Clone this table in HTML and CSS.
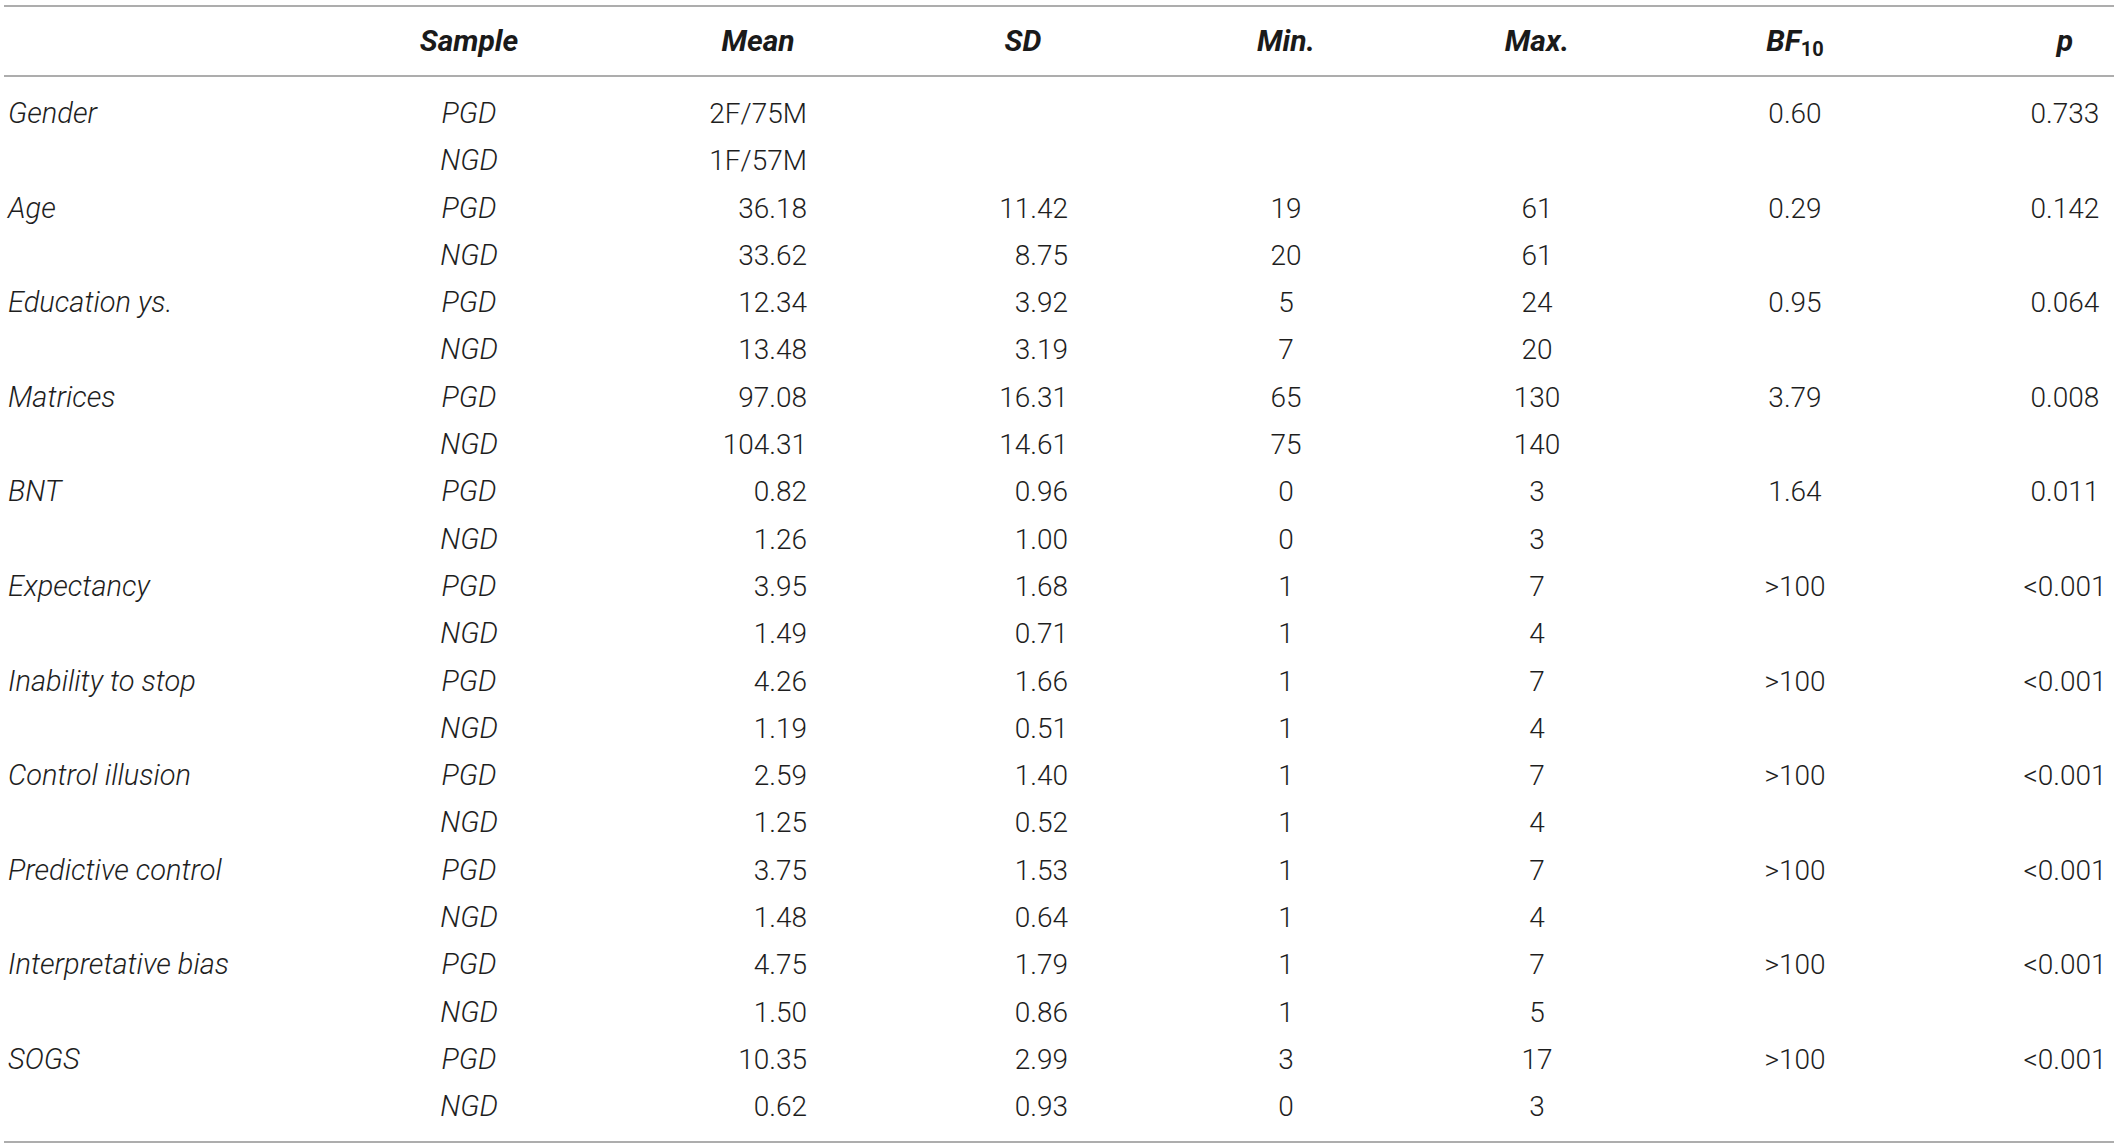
FILE: index.html
```html
<!DOCTYPE html>
<html lang="en">
<head>
<meta charset="utf-8">
<title>Descriptive statistics</title>
<link rel="stylesheet" href="styles.css">
</head>
<body>
<div class="page">
<table class="stats">
<colgroup>
<col class="c-label"><col class="c-sample"><col class="c-mean"><col class="c-sd"><col class="c-min"><col class="c-max"><col class="c-bf"><col class="c-p">
</colgroup>
<thead>
<tr>
<th class="label"></th>
<th>Sample</th>
<th>Mean</th>
<th>SD</th>
<th>Min.</th>
<th>Max.</th>
<th>BF<sub>10</sub></th>
<th class="pcol">p</th>
</tr>
</thead>
<tbody>
<tr class="first"><td class="label">Gender</td><td class="sample">PGD</td><td class="mean">2F/75M</td><td class="sd"></td><td class="mid"></td><td class="mid"></td><td class="mid">0.60</td><td class="pcol">0.733</td></tr>
<tr><td class="label"></td><td class="sample">NGD</td><td class="mean">1F/57M</td><td class="sd"></td><td class="mid"></td><td class="mid"></td><td class="mid"></td><td class="pcol"></td></tr>
<tr><td class="label">Age</td><td class="sample">PGD</td><td class="mean">36.18</td><td class="sd">11.42</td><td class="mid">19</td><td class="mid">61</td><td class="mid">0.29</td><td class="pcol">0.142</td></tr>
<tr><td class="label"></td><td class="sample">NGD</td><td class="mean">33.62</td><td class="sd">8.75</td><td class="mid">20</td><td class="mid">61</td><td class="mid"></td><td class="pcol"></td></tr>
<tr><td class="label">Education ys.</td><td class="sample">PGD</td><td class="mean">12.34</td><td class="sd">3.92</td><td class="mid">5</td><td class="mid">24</td><td class="mid">0.95</td><td class="pcol">0.064</td></tr>
<tr><td class="label"></td><td class="sample">NGD</td><td class="mean">13.48</td><td class="sd">3.19</td><td class="mid">7</td><td class="mid">20</td><td class="mid"></td><td class="pcol"></td></tr>
<tr><td class="label">Matrices</td><td class="sample">PGD</td><td class="mean">97.08</td><td class="sd">16.31</td><td class="mid">65</td><td class="mid">130</td><td class="mid">3.79</td><td class="pcol">0.008</td></tr>
<tr><td class="label"></td><td class="sample">NGD</td><td class="mean">104.31</td><td class="sd">14.61</td><td class="mid">75</td><td class="mid">140</td><td class="mid"></td><td class="pcol"></td></tr>
<tr><td class="label">BNT</td><td class="sample">PGD</td><td class="mean">0.82</td><td class="sd">0.96</td><td class="mid">0</td><td class="mid">3</td><td class="mid">1.64</td><td class="pcol">0.011</td></tr>
<tr><td class="label"></td><td class="sample">NGD</td><td class="mean">1.26</td><td class="sd">1.00</td><td class="mid">0</td><td class="mid">3</td><td class="mid"></td><td class="pcol"></td></tr>
<tr><td class="label">Expectancy</td><td class="sample">PGD</td><td class="mean">3.95</td><td class="sd">1.68</td><td class="mid">1</td><td class="mid">7</td><td class="mid">&gt;100</td><td class="pcol">&lt;0.001</td></tr>
<tr><td class="label"></td><td class="sample">NGD</td><td class="mean">1.49</td><td class="sd">0.71</td><td class="mid">1</td><td class="mid">4</td><td class="mid"></td><td class="pcol"></td></tr>
<tr><td class="label">Inability to stop</td><td class="sample">PGD</td><td class="mean">4.26</td><td class="sd">1.66</td><td class="mid">1</td><td class="mid">7</td><td class="mid">&gt;100</td><td class="pcol">&lt;0.001</td></tr>
<tr><td class="label"></td><td class="sample">NGD</td><td class="mean">1.19</td><td class="sd">0.51</td><td class="mid">1</td><td class="mid">4</td><td class="mid"></td><td class="pcol"></td></tr>
<tr><td class="label">Control illusion</td><td class="sample">PGD</td><td class="mean">2.59</td><td class="sd">1.40</td><td class="mid">1</td><td class="mid">7</td><td class="mid">&gt;100</td><td class="pcol">&lt;0.001</td></tr>
<tr><td class="label"></td><td class="sample">NGD</td><td class="mean">1.25</td><td class="sd">0.52</td><td class="mid">1</td><td class="mid">4</td><td class="mid"></td><td class="pcol"></td></tr>
<tr><td class="label">Predictive control</td><td class="sample">PGD</td><td class="mean">3.75</td><td class="sd">1.53</td><td class="mid">1</td><td class="mid">7</td><td class="mid">&gt;100</td><td class="pcol">&lt;0.001</td></tr>
<tr><td class="label"></td><td class="sample">NGD</td><td class="mean">1.48</td><td class="sd">0.64</td><td class="mid">1</td><td class="mid">4</td><td class="mid"></td><td class="pcol"></td></tr>
<tr><td class="label">Interpretative bias</td><td class="sample">PGD</td><td class="mean">4.75</td><td class="sd">1.79</td><td class="mid">1</td><td class="mid">7</td><td class="mid">&gt;100</td><td class="pcol">&lt;0.001</td></tr>
<tr><td class="label"></td><td class="sample">NGD</td><td class="mean">1.50</td><td class="sd">0.86</td><td class="mid">1</td><td class="mid">5</td><td class="mid"></td><td class="pcol"></td></tr>
<tr><td class="label">SOGS</td><td class="sample">PGD</td><td class="mean">10.35</td><td class="sd">2.99</td><td class="mid">3</td><td class="mid">17</td><td class="mid">&gt;100</td><td class="pcol">&lt;0.001</td></tr>
<tr class="last"><td class="label"></td><td class="sample">NGD</td><td class="mean">0.62</td><td class="sd">0.93</td><td class="mid">0</td><td class="mid">3</td><td class="mid"></td><td class="pcol"></td></tr>
</tbody>
</table>
</div>
</body>
</html>
```
FILE: styles.css
```css
html, body {
  margin: 0;
  padding: 0;
  background: #ffffff;
}

.page {
  padding: 5px 6px 0 4px;
}

.stats {
  width: 2110px;
  table-layout: fixed;
  border-collapse: separate;
  border-spacing: 0;
  border-top: 2px solid #adadad;
  border-bottom: 2px solid #adadad;
  font-family: Roboto, "Liberation Sans", sans-serif;
  font-weight: 300;
  font-size: 28px;
  color: #1e1e1e;
}

.c-label { width: 326px; }
.c-sample { width: 278px; }
.c-mean { width: 300px; }
.c-sd { width: 230px; }
.c-min { width: 296px; }
.c-max { width: 206px; }
.c-bf { width: 310px; }
.c-p { width: 164px; }

.stats th {
  height: 68px;
  padding: 0;
  border-bottom: 2px solid #adadad;
  font-weight: 700;
  font-style: italic;
  font-size: 30px;
  line-height: 68px;
  color: #1a1a1a;
  text-align: center;
  vertical-align: middle;
  white-space: nowrap;
}

.stats th sub {
  font-size: 20px;
  font-style: normal;
  vertical-align: -5px;
  line-height: 0;
}

.stats td {
  padding: 0;
  line-height: 47.3px;
  vertical-align: middle;
  white-space: nowrap;
}

.stats tr.first td {
  padding-top: 13px;
}

.stats tr.last td {
  padding-bottom: 10px;
}

.stats td.label {
  text-align: left;
  padding-left: 4px;
  font-style: italic;
  font-size: 29px;
}

.stats td.sample {
  text-align: center;
  font-style: italic;
  font-size: 29px;
}

.stats td.mean {
  text-align: right;
  padding-right: 101px;
}

.stats td.sd {
  text-align: right;
  padding-right: 70px;
}

.stats td.mid {
  text-align: center;
}

.stats .pcol {
  text-align: center;
  padding-left: 66px;
}
```
